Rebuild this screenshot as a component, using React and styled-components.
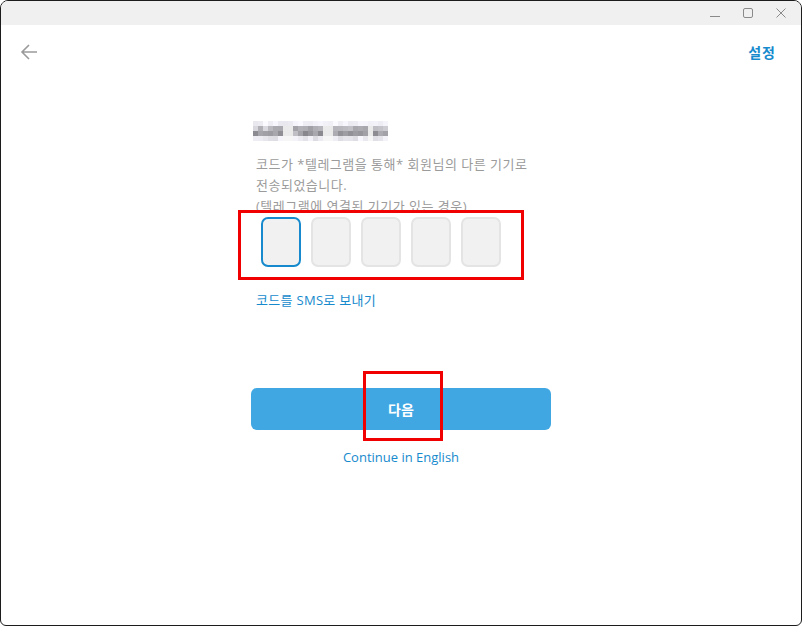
import React from 'react';
import styled, { createGlobalStyle } from 'styled-components';

const GlobalStyle = createGlobalStyle`
  html, body {
    margin: 0;
    padding: 0;
    background: #ffffff;
  }
  body {
    font-family: 'Open Sans', 'Noto Sans CJK KR', sans-serif;
  }
`;

const Frame = styled.div`
  position: relative;
  width: 802px;
  height: 626px;
  box-sizing: border-box;
  border: 1px solid #1c1c1c;
  border-radius: 8px 8px 6px 6px;
  overflow: hidden;
  background: #ffffff;
  display: flex;
  flex-direction: column;
`;

const TitleBar = styled.div`
  height: 24px;
  background: #f0f0f0;
  display: flex;
  justify-content: flex-end;
  align-items: center;
  padding-right: 4px;
`;

const WinButton = styled.div`
  width: 33px;
  height: 24px;
  display: flex;
  align-items: center;
  justify-content: center;
  color: #8a8a8a;
`;

const TopBar = styled.div`
  height: 54px;
  display: flex;
  align-items: center;
  justify-content: space-between;
  padding: 0 25px 0 19px;
`;

const BackButton = styled.div`
  display: flex;
  align-items: center;
  color: #9a9a9a;
`;

const SettingsLink = styled.span`
  color: #168acd;
  font-size: 14px;
  font-weight: 600;
  letter-spacing: 1px;
`;

const Body = styled.div`
  flex: 1;
  display: flex;
  flex-direction: column;
  align-items: center;
`;

const Column = styled.div`
  width: 300px;
  display: flex;
  flex-direction: column;
  padding-top: 42px;
`;

const Blurred = styled.div`
  margin-left: 2px;
  display: grid;
  grid-template-columns: repeat(27, 5px);
  grid-auto-rows: 5px;
  width: 135px;
`;

const Pixel = styled.span`
  background: ${(p) => p.$c};
`;

const Description = styled.p`
  margin: 13px 0 0 5px;
  font-size: 13px;
  line-height: 21px;
  color: #9b9b9b;
  letter-spacing: 0.5px;
`;

const CodeWrap = styled.div`
  position: relative;
  display: flex;
  gap: 10px;
  margin: 0 0 0 10px;
`;

const CodeBox = styled.div`
  width: 40px;
  height: 50px;
  box-sizing: border-box;
  border-radius: 7px;
  background: #f1f1f1;
  border: 2px solid ${(p) => (p.$active ? '#168acd' : '#e4e4e4')};
`;

const Mark = styled.div`
  position: absolute;
  border: 3px solid #f00000;
  box-sizing: border-box;
  pointer-events: none;
`;

const SmsLink = styled.span`
  margin: 23px 0 0 5px;
  font-size: 13px;
  color: #168acd;
  letter-spacing: 0.3px;
`;

const NextButton = styled.div`
  position: relative;
  margin-top: 79px;
  height: 42px;
  border-radius: 6px;
  background: #40a7e3;
  color: #ffffff;
  font-size: 14px;
  font-weight: 700;
  display: flex;
  align-items: center;
  justify-content: center;
`;

const EnglishLink = styled.span`
  margin-top: 18px;
  text-align: center;
  font-size: 13px;
  color: #168acd;
`;

const shade = (r, c) => {
  const gaps = [6, 7, 14, 15, 23];
  if (gaps.includes(c) && r > 0) return r === 3 ? '#f6f6f6' : '#eaeaea';
  const n = Math.abs(Math.sin(r * 12.9898 + c * 78.233) * 43758.5453) % 1;
  let v;
  if (r === 0) v = 232 + n * 18;
  else if (r === 1) v = 160 + n * 60;
  else if (r === 2) v = 135 + n * 70;
  else v = 220 + n * 30;
  const g = Math.round(v);
  return `rgb(${g},${g},${Math.min(255, g + 6)})`;
};

const pixels = [];
for (let r = 0; r < 4; r++) {
  for (let c = 0; c < 27; c++) pixels.push(shade(r, c));
}

export default function App() {
  return (
    <>
      <GlobalStyle />
      <Frame>
        <TitleBar>
          <WinButton>
            <svg width="12" height="12" viewBox="0 0 12 12">
              <path d="M1 9.5h10" stroke="currentColor" strokeWidth="1" />
            </svg>
          </WinButton>
          <WinButton>
            <svg width="12" height="12" viewBox="0 0 12 12">
              <rect x="1.5" y="1.5" width="9" height="9" rx="1.5" fill="none" stroke="currentColor" strokeWidth="1" />
            </svg>
          </WinButton>
          <WinButton>
            <svg width="12" height="12" viewBox="0 0 12 12">
              <path d="M1.5 1.5l9 9M10.5 1.5l-9 9" stroke="currentColor" strokeWidth="1" />
            </svg>
          </WinButton>
        </TitleBar>
        <TopBar>
          <BackButton>
            <svg width="18" height="18" viewBox="0 0 18 18">
              <path d="M2 9h15M9 2L2 9l7 7" fill="none" stroke="currentColor" strokeWidth="1.6" />
            </svg>
          </BackButton>
          <SettingsLink>설정</SettingsLink>
        </TopBar>
        <Body>
          <Column>
            <Blurred>
              {pixels.map((c, i) => (
                <Pixel key={i} $c={c} />
              ))}
            </Blurred>
            <Description>
              코드가 *텔레그램을 통해* 회원님의 다른 기기로
              <br />
              전송되었습니다.
              <br />
              (텔레그램에 연결된 기기가 있는 경우)
            </Description>
            <CodeWrap>
              {[0, 1, 2, 3, 4].map((i) => (
                <CodeBox key={i} $active={i === 0} />
              ))}
              <Mark style={{ left: -23, top: -7, width: 286, height: 70 }} />
            </CodeWrap>
            <SmsLink>코드를 SMS로 보내기</SmsLink>
            <NextButton>
              다음
              <Mark style={{ left: 112, top: -17, width: 80, height: 70 }} />
            </NextButton>
            <EnglishLink>Continue in English</EnglishLink>
          </Column>
        </Body>
      </Frame>
    </>
  );
}
